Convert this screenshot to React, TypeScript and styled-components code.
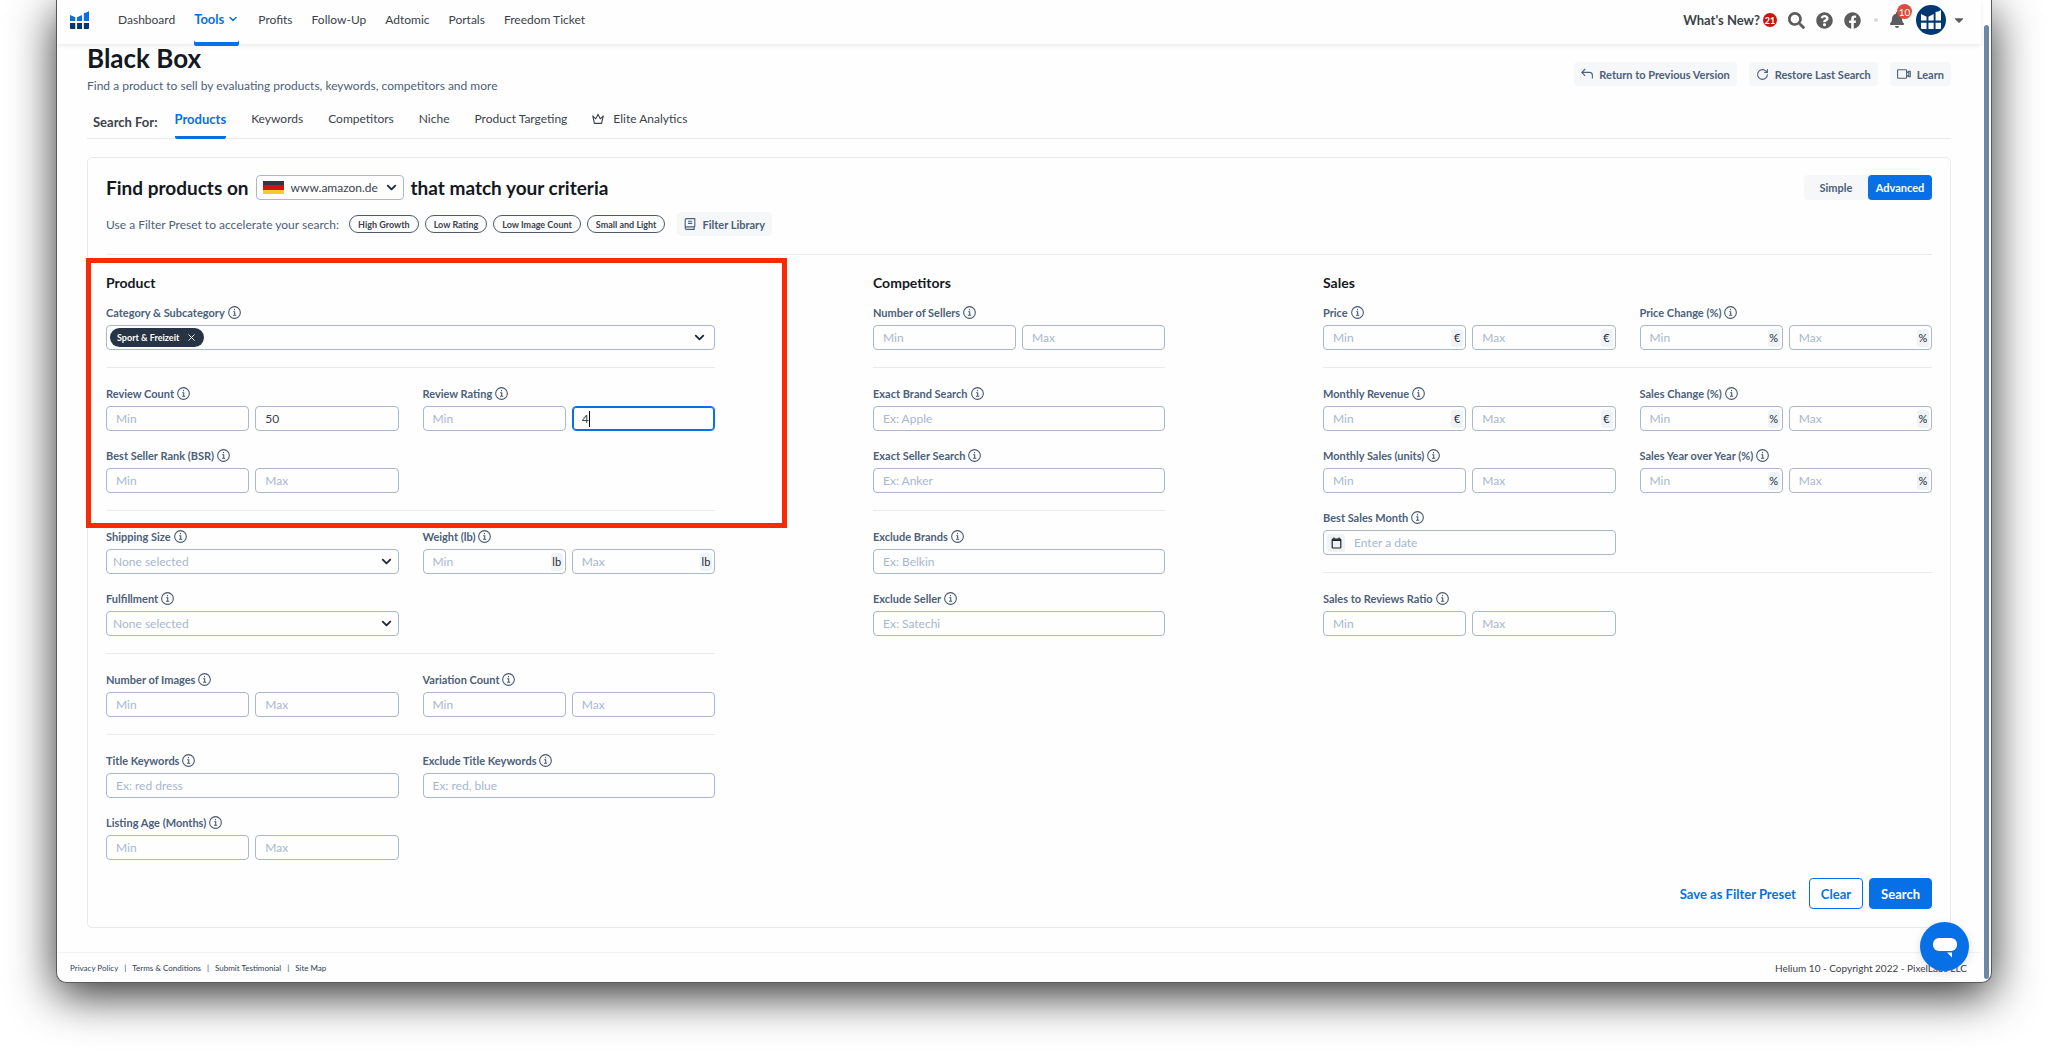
import React from "react";
import styled, { createGlobalStyle } from "styled-components";
import { ChevronDown, X, RotateCw } from "lucide-react";
import { FaSearch, FaQuestionCircle, FaFacebook, FaBell, FaCaretDown } from "react-icons/fa";

const color = {
  blue: "#0870e6",
  navy: "#003873",
  ink: "#14181f",
  text: "#3b424b",
  slate: "#4b607a",
  muted: "#a9b7cd",
  border: "#aab7cc",
  rule: "#e8eaed",
  soft: "#f5f7f9",
  red: "#fb2a06",
};

const GlobalStyle = createGlobalStyle`
  *, *::before, *::after { box-sizing: border-box; }
  body { margin: 0; background: #fff; font-family: Lato, "Open Sans", sans-serif; font-size: 12px; color: ${color.text}; }
  button, input, select { font: inherit; color: inherit; margin: 0; }
  button { cursor: pointer; border: 0; background: none; padding: 0; }
  h1, h2, h3, p { margin: 0; }
  a { color: inherit; text-decoration: none; }
  svg { display: block; flex: none; }
`;

const Desktop = styled.div`
  padding: 0 56px 75px;
  overflow: hidden;
`;

const Window = styled.div`
  position: relative;
  padding-right: 10px;
  background: #fefefe;
  border: 1px solid #5a5a5a;
  border-top: 0;
  border-radius: 0 0 10px 10px;
  box-shadow: 0 12px 46px rgba(0, 0, 0, 0.82);
`;

const ScrollThumb = styled.div`
  position: absolute;
  top: 25px;
  right: 2px;
  bottom: 3px;
  width: 5px;
  border-radius: 3px;
  background: #6b88a6;
`;

const TopBar = styled.header`
  display: flex;
  align-items: flex-start;
  justify-content: space-between;
  height: 44px;
  padding: 0 15px 0 13px;
  box-shadow: 0 2px 4px rgba(0, 0, 0, 0.07);
`;

const NavLinks = styled.nav`
  display: flex;
  align-items: center;
  gap: 19px;
`;

const Brand = styled.a`
  margin-right: 10px;
  padding-bottom: 6px;
`;

const NavLink = styled.a<{ $active?: boolean }>`
  display: flex;
  align-items: center;
  gap: 3px;
  height: 46px;
  padding-bottom: 8px;
  font-size: ${(p) => (p.$active ? 13 : 12)}px;
  font-weight: ${(p) => (p.$active ? 700 : 400)};
  color: ${(p) => (p.$active ? color.blue : color.text)};
  box-shadow: ${(p) => (p.$active ? `inset 0 -4px ${color.blue}` : "none")};
  border-radius: 2px;
`;

const NavTools = styled.div`
  display: flex;
  align-items: center;
  gap: 11px;
  height: 40px;
  color: #5c5c5c;
`;

const News = styled.a`
  display: flex;
  align-items: center;
  gap: 3px;
  font-size: 13px;
  font-weight: 700;
  color: ${color.text};
`;

const Count = styled.span`
  display: grid;
  place-items: center;
  width: 14px;
  height: 14px;
  border-radius: 7px;
  background: #c8150c;
  color: #fff;
  font-size: 9px;
  font-weight: 700;
`;

const Dot = styled.span`
  width: 4px;
  height: 4px;
  margin-left: 2px;
  border-radius: 2px;
  background: #dcdcdc;
`;

const BellButton = styled.button`
  position: relative;
`;

const BellCount = styled.span`
  position: absolute;
  top: -8px;
  right: -7px;
  display: grid;
  place-items: center;
  width: 15px;
  height: 15px;
  border-radius: 8px;
  background: #dd4b3e;
  color: #fff;
  font-size: 10px;
`;

const Account = styled.button`
  display: flex;
  align-items: center;
  gap: 6px;
`;

const Avatar = styled.span`
  display: grid;
  place-items: center;
  width: 30px;
  height: 30px;
  border-radius: 15px;
  background: ${color.navy};
`;

const Main = styled.main`
  padding: 0 30px;
`;

const PageHead = styled.div`
  display: flex;
  justify-content: space-between;
  align-items: flex-start;
`;

const PageTitle = styled.h1`
  font-size: 26px;
  line-height: 28px;
  font-weight: 700;
  color: ${color.ink};
`;

const Subtitle = styled.p`
  padding-top: 5px;
  line-height: 18px;
  color: ${color.slate};
`;

const Actions = styled.div`
  display: flex;
  gap: 12px;
  padding-top: 18px;
`;

const SoftButton = styled.button`
  display: flex;
  align-items: center;
  gap: 6px;
  height: 24px;
  padding: 0 7px;
  border-radius: 4px;
  background: ${color.soft};
  color: ${color.slate};
  font-size: 11px;
  font-weight: 700;
`;

const Tabs = styled.nav`
  display: flex;
  gap: 25px;
  height: 44px;
  padding-left: 6px;
  border-bottom: 1px solid ${color.rule};
`;

const TabsLabel = styled.span`
  margin-right: -8px;
  padding-top: 18px;
  line-height: 18px;
  font-size: 13px;
  font-weight: 700;
`;

const Tab = styled.a<{ $active?: boolean }>`
  display: flex;
  gap: 9px;
  align-items: flex-start;
  height: 44px;
  padding-top: 15px;
  line-height: 18px;
  font-size: ${(p) => (p.$active ? 13 : 12)}px;
  color: ${(p) => (p.$active ? color.blue : color.text)};
  font-weight: ${(p) => (p.$active ? 700 : 400)};
  border-bottom: 3px solid ${(p) => (p.$active ? color.blue : "transparent")};
  border-radius: 2px;

  svg {
    margin-top: 3px;
  }
`;

const Card = styled.section`
  margin-top: 18px;
  padding: 17px 18px 18px;
  border: 1px solid ${color.rule};
  border-radius: 5px;
`;

const CardHead = styled.div`
  display: flex;
  justify-content: space-between;
`;

const Question = styled.h2`
  display: flex;
  align-items: center;
  gap: 7px;
  height: 25px;
  font-size: 19px;
  font-weight: 700;
  color: ${color.ink};
`;

const Market = styled.span`
  display: flex;
  align-items: center;
  position: relative;
  height: 25px;
  padding-left: 6px;
  border: 1px solid ${color.border};
  border-radius: 4px;
  font-size: 12px;
  font-weight: 400;
  color: ${color.text};
`;

const Flag = styled.span`
  width: 21px;
  height: 13px;
  background: linear-gradient(#32363f 0 33%, #d6100c 33% 67%, #f5cc2e 67%);
`;

const MarketSelect = styled.select`
  appearance: none;
  width: 119px;
  height: 23px;
  padding: 0 18px 0 7px;
  border: 0;
  background: transparent;
  outline: none;
`;

const Chevron = styled(ChevronDown)<{ $right: number }>`
  position: absolute;
  top: 4px;
  right: ${(p) => p.$right}px;
  color: #222a35;
  pointer-events: none;
`;

const Mode = styled.div`
  display: flex;
  border-radius: 4px;
  background: ${color.soft};
`;

const ModeButton = styled.button<{ $active?: boolean }>`
  width: 64px;
  height: 25px;
  border-radius: 4px;
  font-size: 11px;
  font-weight: 700;
  background: ${(p) => (p.$active ? color.blue : "transparent")};
  color: ${(p) => (p.$active ? "#fff" : color.slate)};
`;

const Presets = styled.div`
  display: flex;
  align-items: center;
  gap: 6px;
  margin-top: 12px;
  padding-bottom: 18px;
  border-bottom: 1px solid ${color.rule};
  color: ${color.slate};

  ${SoftButton} {
    margin-left: 6px;
  }
`;

const PresetsLabel = styled.span`
  padding-right: 4px;
`;

const Pill = styled.button`
  height: 18px;
  padding: 0 8px;
  border: 1px solid #4f5a68;
  border-radius: 9px;
  font-size: 9px;
  font-weight: 700;
  color: ${color.text};
`;

const Columns = styled.div`
  display: grid;
  grid-template-columns: 609fr 292fr 609fr;
  gap: 158px;
  padding-top: 18px;
`;

const Column = styled.div`
  min-width: 0;
`;

const Highlighted = styled.div`
  position: relative;

  &::before {
    content: "";
    position: absolute;
    inset: -15px -72px -17px -20px;
    border: 5px solid ${color.red};
    pointer-events: none;
  }
`;

const ColumnTitle = styled.h3`
  padding-bottom: 10px;
  font-size: 14px;
  line-height: 20px;
  font-weight: 700;
  color: ${color.ink};
`;

const Group = styled.div<{ $cols?: number }>`
  display: grid;
  grid-template-columns: repeat(${(p) => p.$cols ?? 2}, 1fr);
  gap: 15px 24px;
`;

const Rule = styled.hr`
  height: 1px;
  margin: 17px 0 16px;
  border: 0;
  background: ${color.rule};
`;

const FieldBox = styled.div<{ $wide?: boolean }>`
  grid-column: ${(p) => (p.$wide ? "1 / -1" : "auto")};
  min-width: 0;
`;

const FieldLabel = styled.label`
  display: flex;
  align-items: center;
  gap: 3px;
  height: 18px;
  margin-bottom: 4px;
  font-size: 11px;
  font-weight: 700;
  color: ${color.slate};
`;

const Pair = styled.div`
  display: flex;
  gap: 6px;
`;

const Control = styled.div<{ $focus?: boolean }>`
  position: relative;
  display: flex;
  align-items: center;
  flex: 1 1 0;
  min-width: 0;
  height: 25px;
  border: 1px solid ${(p) => (p.$focus ? color.blue : color.border)};
  box-shadow: ${(p) => (p.$focus ? `inset 0 0 0 1px ${color.blue}` : "none")};
  border-radius: 4px;
  padding-right: 2px;
`;

const TextInput = styled.input`
  flex: 1;
  min-width: 0;
  height: 23px;
  padding: 0 0 0 9px;
  border: 0;
  outline: none;
  background: transparent;
  color: ${color.text};

  &::placeholder {
    color: ${color.muted};
    opacity: 1;
  }
`;

const Caret = styled.span`
  position: absolute;
  left: 16px;
  top: 4px;
  width: 1px;
  height: 16px;
  background: #000;
`;

const Unit = styled.span`
  display: grid;
  place-items: center;
  min-width: 12px;
  height: 18px;
  padding: 0 1px;
  border-radius: 3px;
  background: #f0f3f5;
  font-size: 11px;
  color: #222a35;
`;

const DateIcon = styled.span`
  display: grid;
  place-items: center;
  width: 18px;
  height: 18px;
  margin-left: 3px;
  border-radius: 3px;
  background: #f0f3f5;
`;

const PlainSelect = styled.select`
  appearance: none;
  flex: 1;
  height: 23px;
  padding: 0 20px 0 6px;
  border: 0;
  outline: none;
  background: transparent;
  color: ${color.muted};
`;

const Chip = styled.span`
  display: flex;
  align-items: center;
  gap: 7px;
  height: 19px;
  margin-left: 3px;
  padding: 0 7px;
  border-radius: 10px;
  background: #273444;
  color: #fff;
  font-size: 9px;
  font-weight: 700;
`;

const Footer = styled.footer`
  display: flex;
  align-items: center;
  justify-content: space-between;
  height: 30px;
  margin-top: 24px;
  padding: 0 14px 0 13px;
  border-top: 1px solid #f0f1f3;
  font-size: 10px;
`;

const FooterLinks = styled.div`
  display: flex;
  gap: 6px;
  font-size: 8px;
  color: #2f4058;
`;

const Submit = styled.div`
  display: flex;
  justify-content: flex-end;
  align-items: center;
  gap: 6px;
  margin-top: 18px;
`;

const TextButton = styled.button`
  padding: 0 7px;
  color: ${color.blue};
  font-size: 13px;
  font-weight: 700;
`;

const BigButton = styled.button<{ $primary?: boolean }>`
  height: 31px;
  padding: 0 11px;
  border: 1px solid ${color.blue};
  border-radius: 4px;
  background: ${(p) => (p.$primary ? color.blue : "#fff")};
  color: ${(p) => (p.$primary ? "#fff" : color.blue)};
  font-size: 13px;
  font-weight: 700;
`;

const ChatButton = styled.button`
  position: absolute;
  right: 22px;
  bottom: 11px;
  display: grid;
  place-items: center;
  width: 49px;
  height: 49px;
  border-radius: 25px;
  background: ${color.blue};
  box-shadow: 0 2px 10px rgba(0, 0, 0, 0.12);
`;

const BarsLogo = ({ size, top, bottom }: { size: number; top: string; bottom: string }) => (
  <svg width={size} height={size} viewBox="0 0 18 18" aria-hidden="true">
    <path fill={top} d="M0 3.7 5 6v3.4H0zM6.7 6l4.7-2.3v5.7H6.7zM13.1 1.8Q15.6 1.8 18 0v9.4h-4.9z" />
    <path fill={bottom} d="M0 11.4h5V17H.8Q0 17 0 16.2zM6.7 11.4h4.7V17H6.7zM13.1 11.4H18v4.8q0 .8-.8.8h-4.1z" />
  </svg>
);

const InfoIcon = () => (
  <svg width="13" height="13" viewBox="0 0 12 12" fill="none" stroke="#46586f" aria-hidden="true">
    <circle cx="6" cy="6" r="5.4" />
    <path d="M4.8 5.3h1.4v3M4.6 8.5h3" />
    <path d="M5.5 3.3h1" strokeWidth="1.2" />
  </svg>
);

const ReturnIcon = () => (
  <svg width="12" height="12" viewBox="0 0 12 12" fill="none" stroke="currentColor" strokeWidth="1.1" aria-hidden="true">
    <path d="M4.2 1 .8 4.4l3.4 3.4M.9 4.4h7.5q3 0 3 3v3.2" />
  </svg>
);

const VideoIcon = () => (
  <svg width="14" height="12" viewBox="0 0 14 12" fill="none" stroke="currentColor" strokeWidth="1.1" aria-hidden="true">
    <rect x=".6" y="1.8" width="9" height="8.4" rx=".6" />
    <path d="m9.6 4.8 2.1-1.6h1.6v5.6h-1.6L9.6 7.2M11.7 3.2v5.6" />
  </svg>
);

const CrownIcon = () => (
  <svg width="12" height="12" viewBox="0 0 12 12" fill="none" stroke="currentColor" strokeWidth="1.1" strokeLinejoin="round" aria-hidden="true">
    <path d="M2.4 10.4.8 3.2l2.9 2.6L6 1.6l2.3 4.2 2.9-2.6-1.6 7.2zM.2 3h1.2M5.4 1.4h1.2M10.6 3h1.2" />
  </svg>
);

const BookIcon = () => (
  <svg width="12" height="12" viewBox="0 0 12 12" fill="none" stroke="currentColor" strokeWidth="1.1" aria-hidden="true">
    <path d="M10.8 8.9V.6H2.6q-1.4 0-1.4 1.4v8q0 1.4 1.4 1.4h8.2M10.8 8.9H2.6q-1.4 0-1.4 1.2M10.2 9v2.3M4 3.2h4.2M4 5.4h4.2" />
  </svg>
);

const CalendarIcon = () => (
  <svg width="11" height="12" viewBox="0 0 11 12" fill="none" stroke="#1c2430" aria-hidden="true">
    <rect x="1.2" y="2.2" width="8.6" height="8.8" rx=".8" strokeWidth="1.2" />
    <path d="M1 3.2h9" strokeWidth="1.6" />
    <path d="M3 .6v2M8 .6v2" strokeWidth="1.2" />
  </svg>
);

const ChatIcon = () => (
  <svg width="26" height="22" viewBox="0 0 26 22" fill="#fff" aria-hidden="true">
    <rect x="1" y="2" width="24" height="13" rx="6" />
    <path d="M15 16.5h5v5z" />
  </svg>
);

type FieldProps = { name: string; wide?: boolean; children: React.ReactNode };

const idOf = (name: string) => name.toLowerCase().replace(/[^a-z]+/g, "-");

const Field = ({ name, wide, children }: FieldProps) => (
  <FieldBox $wide={wide}>
    <FieldLabel htmlFor={idOf(name)}>
      {name}
      <InfoIcon />
    </FieldLabel>
    {children}
  </FieldBox>
);

type RangeProps = { name: string; unit?: string; max?: string; editing?: boolean };

const Range = ({ name, unit, max, editing }: RangeProps) => (
  <Field name={name}>
    <Pair>
      <Control>
        <TextInput id={idOf(name)} placeholder="Min" />
        {unit && <Unit>{unit}</Unit>}
      </Control>
      <Control $focus={editing}>
        <TextInput aria-label={`${name} maximum`} placeholder="Max" defaultValue={max} />
        {editing && <Caret />}
        {unit && <Unit>{unit}</Unit>}
      </Control>
    </Pair>
  </Field>
);

const TextField = ({ name, hint }: { name: string; hint: string }) => (
  <Field name={name}>
    <Control>
      <TextInput id={idOf(name)} placeholder={hint} />
    </Control>
  </Field>
);

const SelectField = ({ name }: { name: string }) => (
  <Field name={name}>
    <Control>
      <PlainSelect id={idOf(name)}>
        <option>None selected</option>
      </PlainSelect>
      <Chevron size={15} strokeWidth={3} $right={4} />
    </Control>
  </Field>
);

const navItems = ["Profits", "Follow-Up", "Adtomic", "Portals", "Freedom Ticket"];
const tabItems = ["Keywords", "Competitors", "Niche", "Product Targeting"];
const presets = ["High Growth", "Low Rating", "Low Image Count", "Small and Light"];
const legal = ["Privacy Policy", "Terms & Conditions", "Submit Testimonial", "Site Map"];

export default function App() {
  return (
    <Desktop>
      <GlobalStyle />
      <Window>
        <TopBar>
          <NavLinks>
            <Brand href="#" aria-label="Home">
              <BarsLogo size={19} top={color.blue} bottom={color.navy} />
            </Brand>
            <NavLink href="#">Dashboard</NavLink>
            <NavLink href="#" $active>
              Tools
              <ChevronDown size={12} strokeWidth={3} />
            </NavLink>
            {navItems.map((item) => (
              <NavLink href="#" key={item}>
                {item}
              </NavLink>
            ))}
          </NavLinks>
          <NavTools>
            <News href="#">
              What's New?<Count>21</Count>
            </News>
            <button aria-label="Search">
              <FaSearch size={17} />
            </button>
            <button aria-label="Help">
              <FaQuestionCircle size={17} />
            </button>
            <button aria-label="Facebook">
              <FaFacebook size={17} />
            </button>
            <Dot />
            <BellButton aria-label="Notifications">
              <FaBell size={16} />
              <BellCount>10</BellCount>
            </BellButton>
            <Account aria-label="Account">
              <Avatar>
                <BarsLogo size={20} top="#fff" bottom="#fff" />
              </Avatar>
              <FaCaretDown size={14} />
            </Account>
          </NavTools>
        </TopBar>

        <Main>
          <PageHead>
            <div>
              <PageTitle>Black Box</PageTitle>
              <Subtitle>Find a product to sell by evaluating products, keywords, competitors and more</Subtitle>
            </div>
            <Actions>
              <SoftButton>
                <ReturnIcon />
                Return to Previous Version
              </SoftButton>
              <SoftButton>
                <RotateCw size={13} />
                Restore Last Search
              </SoftButton>
              <SoftButton>
                <VideoIcon />
                Learn
              </SoftButton>
            </Actions>
          </PageHead>

          <Tabs>
            <TabsLabel>Search For:</TabsLabel>
            <Tab href="#" $active>
              Products
            </Tab>
            {tabItems.map((item) => (
              <Tab href="#" key={item}>
                {item}
              </Tab>
            ))}
            <Tab href="#">
              <CrownIcon />
              Elite Analytics
            </Tab>
          </Tabs>

          <Card>
            <CardHead>
              <Question>
                Find products on
                <Market>
                  <Flag />
                  <MarketSelect aria-label="Marketplace">
                    <option>www.amazon.de</option>
                  </MarketSelect>
                  <Chevron size={15} strokeWidth={3} $right={4} />
                </Market>
                that match your criteria
              </Question>
              <Mode>
                <ModeButton>Simple</ModeButton>
                <ModeButton $active>Advanced</ModeButton>
              </Mode>
            </CardHead>
            <Presets>
              <PresetsLabel>Use a Filter Preset to accelerate your search:</PresetsLabel>
              {presets.map((item) => (
                <Pill key={item}>{item}</Pill>
              ))}
              <SoftButton>
                <BookIcon />
                Filter Library
              </SoftButton>
            </Presets>

            <Columns>
              <Column>
                <Highlighted>
                  <ColumnTitle>Product</ColumnTitle>
                  <Group>
                    <Field name="Category & Subcategory" wide>
                      <Control>
                        <Chip>
                          Sport &amp; Freizeit
                          <button aria-label="Remove Sport & Freizeit">
                            <X size={11} />
                          </button>
                        </Chip>
                        <TextInput id={idOf("Category & Subcategory")} />
                        <Chevron size={15} strokeWidth={3} $right={7} />
                      </Control>
                    </Field>
                  </Group>
                  <Rule />
                  <Group>
                    <Range name="Review Count" max="50" />
                    <Range name="Review Rating" max="4" editing />
                    <Range name="Best Seller Rank (BSR)" />
                  </Group>
                  <Rule />
                </Highlighted>
                <Group>
                  <SelectField name="Shipping Size" />
                  <Range name="Weight (lb)" unit="lb" />
                  <SelectField name="Fulfillment" />
                </Group>
                <Rule />
                <Group>
                  <Range name="Number of Images" />
                  <Range name="Variation Count" />
                </Group>
                <Rule />
                <Group>
                  <TextField name="Title Keywords" hint="Ex: red dress" />
                  <TextField name="Exclude Title Keywords" hint="Ex: red, blue" />
                  <Range name="Listing Age (Months)" />
                </Group>
              </Column>

              <Column>
                <ColumnTitle>Competitors</ColumnTitle>
                <Group $cols={1}>
                  <Range name="Number of Sellers" />
                </Group>
                <Rule />
                <Group $cols={1}>
                  <TextField name="Exact Brand Search" hint="Ex: Apple" />
                  <TextField name="Exact Seller Search" hint="Ex: Anker" />
                </Group>
                <Rule />
                <Group $cols={1}>
                  <TextField name="Exclude Brands" hint="Ex: Belkin" />
                  <TextField name="Exclude Seller" hint="Ex: Satechi" />
                </Group>
              </Column>

              <Column>
                <ColumnTitle>Sales</ColumnTitle>
                <Group>
                  <Range name="Price" unit="€" />
                  <Range name="Price Change (%)" unit="%" />
                </Group>
                <Rule />
                <Group>
                  <Range name="Monthly Revenue" unit="€" />
                  <Range name="Sales Change (%)" unit="%" />
                  <Range name="Monthly Sales (units)" />
                  <Range name="Sales Year over Year (%)" unit="%" />
                  <Field name="Best Sales Month">
                    <Control>
                      <DateIcon>
                        <CalendarIcon />
                      </DateIcon>
                      <TextInput id={idOf("Best Sales Month")} placeholder="Enter a date" />
                    </Control>
                  </Field>
                </Group>
                <Rule />
                <Group>
                  <Range name="Sales to Reviews Ratio" />
                </Group>
              </Column>
            </Columns>

            <Submit>
              <TextButton>Save as Filter Preset</TextButton>
              <BigButton>Clear</BigButton>
              <BigButton $primary>Search</BigButton>
            </Submit>
          </Card>
        </Main>

        <Footer>
          <FooterLinks>
            {legal.map((item, i) => (
              <React.Fragment key={item}>
                {i > 0 && <span>|</span>}
                <a href="#">{item}</a>
              </React.Fragment>
            ))}
          </FooterLinks>
          <span>Helium 10 - Copyright 2022 - PixelLabs LLC</span>
        </Footer>
        <ScrollThumb />
        <ChatButton aria-label="Open chat">
          <ChatIcon />
        </ChatButton>
      </Window>
    </Desktop>
  );
}
